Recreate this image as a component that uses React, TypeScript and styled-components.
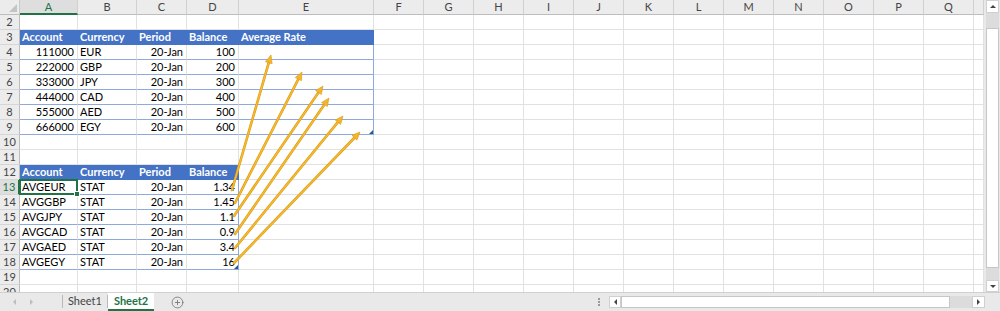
import React from 'react'
import styled, { createGlobalStyle, css } from 'styled-components'
import { PlusCircle } from 'lucide-react'

const GlobalStyle = createGlobalStyle`
  html, body {
    margin: 0;
    padding: 0;
    background: #fff;
  }
  body {
    font-family: Lato, "Liberation Sans", sans-serif;
  }
`

const GREEN = '#217346'

// R is only partly on screen, its letter falls past the edge
const COLS = [
  { name: 'A', w: 58 },
  { name: 'B', w: 59 },
  { name: 'C', w: 50 },
  { name: 'D', w: 52 },
  { name: 'E', w: 135 },
  ...'FGHIJKLMNOPQ'.split('').map((n) => ({ name: n, w: 50 })),
  { name: '', w: 10 },
]

const ROWS = Array.from({ length: 19 }, (_, i) => i + 2)

type Kind = 'plain' | 'head' | 'body'
type Spec = { text?: string; right?: boolean; kind: Kind; edge?: boolean; corner?: boolean; selected?: boolean }

const tables = [
  {
    top: 3,
    cols: 5,
    rightCols: [0, 2, 3],
    header: ['Account', 'Currency', 'Period', 'Balance', 'Average Rate'],
    rows: [
      ['111000', 'EUR', '20-Jan', '100', ''],
      ['222000', 'GBP', '20-Jan', '200', ''],
      ['333000', 'JPY', '20-Jan', '300', ''],
      ['444000', 'CAD', '20-Jan', '400', ''],
      ['555000', 'AED', '20-Jan', '500', ''],
      ['666000', 'EGY', '20-Jan', '600', ''],
    ],
  },
  {
    top: 12,
    cols: 4,
    rightCols: [2, 3],
    header: ['Account', 'Currency', 'Period', 'Balance'],
    rows: [
      ['AVGEUR', 'STAT', '20-Jan', '1.34'],
      ['AVGGBP', 'STAT', '20-Jan', '1.45'],
      ['AVGJPY', 'STAT', '20-Jan', '1.1'],
      ['AVGCAD', 'STAT', '20-Jan', '0.9'],
      ['AVGAED', 'STAT', '20-Jan', '3.4'],
      ['AVGEGY', 'STAT', '20-Jan', '16'],
    ],
  },
]

// selected cell is A13
const SEL_ROW = 13
const SEL_COL = 0

function specFor(row: number, col: number): Spec {
  for (const t of tables) {
    const r = row - t.top
    if (col < t.cols && r >= 0 && r <= t.rows.length) {
      const edge = col === t.cols - 1
      if (r === 0) return { kind: 'head', text: t.header[col], edge }
      return {
        kind: 'body',
        text: t.rows[r - 1][col],
        right: t.rightCols.includes(col),
        edge,
        corner: edge && r === t.rows.length,
        selected: row === SEL_ROW && col === SEL_COL,
      }
    }
  }
  return { kind: 'plain' }
}

// arrows: [fromX, fromY, tipX, tipY]
const arrows = [
  [232, 190, 271, 55],
  [235, 203, 302, 72],
  [234, 216, 323, 86],
  [235, 234, 329, 98],
  [235, 248, 343, 116],
  [234, 263, 360, 132],
]

const Page = styled.div`
  width: 1000px;
  height: 311px;
  display: flex;
  flex-direction: column;
  overflow: hidden;
  background: #fff;
`

const Main = styled.div`
  display: flex;
  height: 292px;
`

const SheetWrap = styled.div`
  position: relative;
  width: 984px;
  height: 292px;
  overflow: hidden;
`

const Grid = styled.div`
  display: grid;
  grid-template-columns: 20px ${COLS.map((c) => `${c.w}px`).join(' ')};
  grid-auto-rows: 15px;
`

const Corner = styled.div`
  box-sizing: border-box;
  background: #ececec;
  border-right: 1px solid #c8c8c8;
  border-bottom: 1px solid #bdbdbd;
  position: relative;

  &::after {
    content: '';
    position: absolute;
    right: 2px;
    bottom: 2px;
    border-left: 8px solid transparent;
    border-bottom: 8px solid #c4c4c4;
  }
`

const ColHead = styled.div<{ $active?: boolean }>`
  box-sizing: border-box;
  background: #ececec;
  border-right: 1px solid #d0d0d0;
  border-bottom: 1px solid #bdbdbd;
  text-align: center;
  font-size: 11px;
  line-height: 14px;
  color: #444;
  overflow: hidden;
  ${(p) =>
    p.$active &&
    css`
      color: ${GREEN};
      background: #dedede;
      border-bottom: 2px solid ${GREEN};
    `}
`

const RowHead = styled.div<{ $active?: boolean }>`
  box-sizing: border-box;
  background: #ececec;
  border-right: 1px solid #bdbdbd;
  border-bottom: 1px solid #d6d6d6;
  text-align: center;
  font-size: 11px;
  line-height: 14px;
  color: #444;
  ${(p) =>
    p.$active &&
    css`
      color: ${GREEN};
      background: #dedede;
      border-right: 2px solid ${GREEN};
    `}
`

const Cell = styled.div<{ $kind: Kind; $right?: boolean; $edge?: boolean; $corner?: boolean; $selected?: boolean }>`
  box-sizing: border-box;
  position: relative;
  padding: 0 3px 0 2px;
  font-size: 11px;
  line-height: 14px;
  white-space: nowrap;
  color: #000;
  background: #fff;
  text-align: ${(p) => (p.$right ? 'right' : 'left')};
  border-right: 1px solid #e1e1e1;
  border-bottom: 1px solid #e1e1e1;

  ${(p) =>
    p.$kind === 'head' &&
    css`
      background: #4472c4;
      color: #fff;
      font-weight: 700;
      border-right-color: #4472c4;
      border-bottom-color: #4472c4;
    `}

  ${(p) =>
    p.$kind === 'body' &&
    css`
      border-bottom-color: #8eaadb;
    `}

  ${(p) =>
    p.$kind === 'body' &&
    p.$edge &&
    css`
      border-right-color: #8eaadb;
    `}

  ${(p) =>
    p.$corner &&
    css`
      &::after {
        content: '';
        position: absolute;
        right: 0;
        bottom: 0;
        border-left: 4px solid transparent;
        border-bottom: 4px solid #2f5597;
      }
    `}

  ${(p) =>
    p.$selected &&
    css`
      z-index: 2;
      &::before {
        content: '';
        position: absolute;
        left: -1px;
        top: -1px;
        right: -1px;
        bottom: -1px;
        border: 2px solid ${GREEN};
      }
      &::after {
        content: '';
        position: absolute;
        right: -3px;
        bottom: -3px;
        width: 4px;
        height: 4px;
        background: ${GREEN};
        border: 1px solid #fff;
      }
    `}
`

const Overlay = styled.svg`
  position: absolute;
  left: 0;
  top: 0;
  pointer-events: none;
  z-index: 3;
`

const VScroll = styled.div`
  width: 16px;
  height: 292px;
  box-sizing: border-box;
  padding: 0 1px 0 2px;
  display: flex;
  flex-direction: column;
  background: #e9e9e9;
`

const Track = styled.div<{ $size?: number }>`
  background: #dcdcdc;
  ${(p) => (p.$size ? `flex: 0 0 ${p.$size}px;` : 'flex: 1;')}
`

const Thumb = styled.div<{ $size: number }>`
  box-sizing: border-box;
  background: #fff;
  border: 1px solid #c6c6c6;
  flex: 0 0 ${(p) => p.$size}px;
`

type Dir = 'up' | 'down' | 'left' | 'right'

const arrowCss: Record<Dir, string> = {
  up: 'border-left: 3px solid transparent; border-right: 3px solid transparent; border-bottom: 3px solid #444;',
  down: 'border-left: 3px solid transparent; border-right: 3px solid transparent; border-top: 3px solid #444;',
  left: 'border-top: 3px solid transparent; border-bottom: 3px solid transparent; border-right: 3px solid #444;',
  right: 'border-top: 3px solid transparent; border-bottom: 3px solid transparent; border-left: 3px solid #444;',
}

const ScrollBtn = styled.div<{ $dir: Dir; $size: number }>`
  box-sizing: border-box;
  flex: 0 0 ${(p) => p.$size}px;
  background: #fff;
  border: 1px solid #d0d0d0;
  display: flex;
  align-items: center;
  justify-content: center;

  &::after {
    content: '';
    width: 0;
    height: 0;
    ${(p) => arrowCss[p.$dir]}
  }
`

const TabBar = styled.div`
  height: 19px;
  box-sizing: border-box;
  display: flex;
  align-items: stretch;
  background: #e9e9e9;
  border-top: 1px solid #d0d0d0;
`

const Nav = styled.div`
  width: 62px;
  display: flex;
  align-items: center;
  gap: 14px;
  padding-left: 13px;
  box-sizing: border-box;
`

const NavArrow = styled.span<{ $dir: 'left' | 'right' }>`
  width: 0;
  height: 0;
  border-top: 3px solid transparent;
  border-bottom: 3px solid transparent;
  ${(p) => (p.$dir === 'left' ? 'border-right: 3px solid #bdbdbd;' : 'border-left: 3px solid #bdbdbd;')}
`

const Sep = styled.div`
  width: 1px;
  margin: 2px 0 3px;
  background: #b9b9b9;
`

const Tab = styled.div<{ $active?: boolean }>`
  box-sizing: border-box;
  padding: 0 5px;
  font-size: 11px;
  line-height: 16px;
  color: #444;
  ${(p) =>
    p.$active &&
    css`
      background: #fff;
      color: ${GREEN};
      font-weight: 700;
      border-bottom: 2px solid ${GREEN};
      padding: 0 6px;
    `}
`

const AddSheet = styled.div`
  margin-left: 17px;
  display: flex;
  align-items: center;
  color: #6a6a6a;
`

const Right = styled.div`
  margin-left: auto;
  display: flex;
  align-items: center;
  padding-right: 15px;
`

const Dots = styled.span`
  width: 2px;
  height: 2px;
  margin-right: 9px;
  background: #9a9a9a;
  box-shadow: 0 -3px 0 #9a9a9a, 0 3px 0 #9a9a9a;
`

const HScroll = styled.div`
  display: flex;
  height: 12px;
  width: 376px;
`

function Arrow({ a }: { a: number[] }) {
  const [x1, y1, x2, y2] = a
  const dx = x2 - x1
  const dy = y2 - y1
  const len = Math.hypot(dx, dy)
  const ux = dx / len
  const uy = dy / len
  const bx = x2 - ux * 8
  const by = y2 - uy * 8
  const px = -uy * 3.5
  const py = ux * 3.5
  const head = `${x2},${y2} ${bx + px},${by + py} ${bx - px},${by - py}`
  return (
    <g>
      <line x1={x1} y1={y1} x2={bx} y2={by} stroke="#d89a18" strokeWidth={2.6} strokeLinecap="round" />
      <line x1={x1} y1={y1} x2={bx} y2={by} stroke="#f8bb2c" strokeWidth={1.4} strokeLinecap="round" />
      <polygon points={head} fill="#f5b52a" stroke="#d89a18" strokeWidth={0.6} />
    </g>
  )
}

export default function App() {
  return (
    <Page>
      <GlobalStyle />
      <Main>
        <SheetWrap>
          <Grid>
            <Corner />
            {COLS.map((c, i) => (
              <ColHead key={i} $active={i === SEL_COL}>
                {c.name}
              </ColHead>
            ))}
            {ROWS.map((row) => (
              <React.Fragment key={row}>
                <RowHead $active={row === SEL_ROW}>{row}</RowHead>
                {COLS.map((c, col) => {
                  const s = specFor(row, col)
                  return (
                    <Cell
                      key={col}
                      $kind={s.kind}
                      $right={s.right}
                      $edge={s.edge}
                      $corner={s.corner}
                      $selected={s.selected}
                    >
                      {s.text}
                    </Cell>
                  )
                })}
              </React.Fragment>
            ))}
          </Grid>
          <Overlay width={984} height={292} viewBox="0 0 984 292">
            {arrows.map((a, i) => (
              <Arrow key={i} a={a} />
            ))}
          </Overlay>
        </SheetWrap>
        <VScroll>
          <ScrollBtn $dir="up" $size={13} />
          <Track $size={15} />
          <Thumb $size={240} />
          <Track />
          <ScrollBtn $dir="down" $size={12} />
        </VScroll>
      </Main>
      <TabBar>
        <Nav>
          <NavArrow $dir="left" />
          <NavArrow $dir="right" />
        </Nav>
        <Sep />
        <Tab>Sheet1</Tab>
        <Sep />
        <Tab $active>Sheet2</Tab>
        <AddSheet>
          <PlusCircle size={13} strokeWidth={1.4} />
        </AddSheet>
        <Right>
          <Dots />
          <HScroll>
            <ScrollBtn $dir="left" $size={12} />
            <Thumb $size={329} />
            <Track />
            <ScrollBtn $dir="right" $size={13} />
          </HScroll>
        </Right>
      </TabBar>
    </Page>
  )
}
